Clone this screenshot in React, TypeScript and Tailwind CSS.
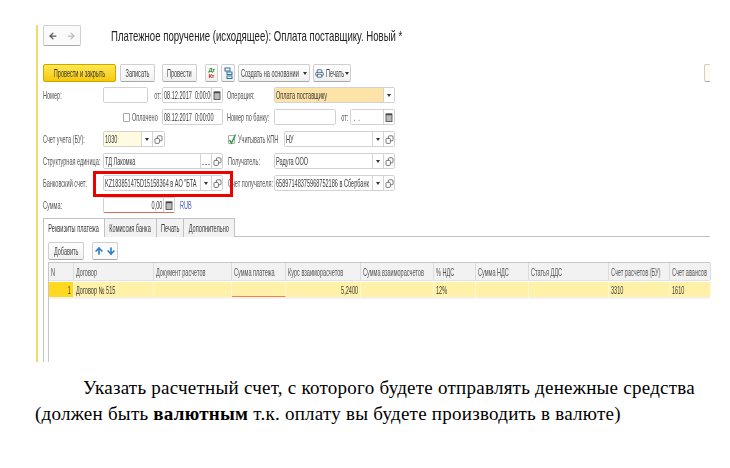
import React from "react";
import { ArrowLeft, ArrowRight, ArrowUp, ArrowDown, Printer } from "lucide-react";

// the source screenshot is squeezed horizontally, so all small text is too
const T = ({ children, o = "origin-left" }: { children: React.ReactNode; o?: string }) => (
  <span className={`inline-block shrink-0 whitespace-nowrap scale-x-[0.53] ${o}`}>{children}</span>
);

const Caret = () => <span className="w-0 h-0 shrink-0 border-x-[2px] border-x-transparent border-t-[3px] border-t-[#333]" />;

const Cal = () => (
  <svg width="8" height="9" viewBox="0 0 8 9" fill="none">
    <rect x="1" y="1" width="6" height="7.5" fill="#bbb" stroke="#555" strokeWidth="0.9" />
    <rect x="1" y="0.6" width="6" height="1.6" fill="#444" />
  </svg>
);

const LinkIcon = () => (
  <svg width="9" height="9" viewBox="0 0 9 9" fill="none" stroke="#555" strokeWidth="0.8">
    <rect x="3.4" y="0.8" width="4.6" height="5" rx="1" />
    <rect x="1" y="3.4" width="4.4" height="5" rx="1" fill="white" />
  </svg>
);

const Side = ({ children, w = "w-[11px]" }: { children: React.ReactNode; w?: string }) => (
  <span className={`${w} h-full shrink-0 border-l border-[#d4d4d4] flex items-center justify-center bg-white`}>{children}</span>
);

function Field({
  w,
  text,
  bg = "bg-white",
  end,
  extra = "",
  children,
}: {
  w: string;
  text?: string;
  bg?: string;
  end?: boolean;
  extra?: string;
  children?: React.ReactNode;
}) {
  return (
    <div className={`${w} h-[16px] shrink-0 flex items-stretch border border-[#d2d2d2] rounded-[2px] overflow-hidden ${extra}`}>
      <span className={`flex-1 min-w-0 ${bg} px-[1px] flex items-center overflow-hidden ${end ? "justify-end" : ""}`}>
        {text && <T o={end ? "origin-right" : "origin-left"}>{text}</T>}
      </span>
      {children}
    </div>
  );
}

const Label = ({ w, children, cn = "", o }: { w: string; children: React.ReactNode; cn?: string; o?: string }) => (
  <span className={`${w} shrink-0 flex text-[#555] ${cn}`}>
    <T o={o}>{children}</T>
  </span>
);

const Check = ({ on }: { on?: boolean }) => (
  <span className="relative w-[7px] h-[9px] shrink-0 border border-[#a8a8a8] bg-white rounded-[1px]">
    {on && (
      <svg className="absolute -top-[3px] -left-[1px]" width="9" height="12" viewBox="0 0 9 12" fill="none" stroke="#2f9e44" strokeWidth="1.4">
        <path d="M1.5 7 L3.5 10 L7.5 1.5" />
      </svg>
    )}
  </span>
);

const Btn = ({ w, children }: { w: string; children: React.ReactNode }) => (
  <div className={`${w} h-[18px] shrink-0 flex items-center justify-center gap-[2px] border border-[#cfcfcf] border-b-[#a9a9a9] rounded-[2px] bg-gradient-to-b from-white to-[#f0f0f0] text-[#444]`}>
    {children}
  </div>
);

const Tab = ({ w, children, active }: { w: string; children: React.ReactNode; active?: boolean }) => (
  <div className={`${w} h-[19px] flex items-center justify-center border-t border-r border-[#c4c4c4] ${active ? "border-l bg-white" : "bg-[#f2f2f2]"}`}>
    <T o="origin-center">{children}</T>
  </div>
);

const columns = [
  { w: "w-[25px]", title: "N", value: "1", cell: "bg-[#ffd91f] justify-end", end: true },
  { w: "w-[80px]", title: "Договор", value: "Договор № 515", cell: "bg-[#fff1a8]" },
  { w: "w-[78px]", title: "Документ расчетов", value: "", cell: "bg-[#fff1a8]" },
  { w: "w-[54px]", title: "Сумма платежа", value: "", cell: "bg-[#fff1a8] border-b border-b-[#f0834a]" },
  { w: "w-[75px]", title: "Курс взаиморасчетов", value: "5,2400", cell: "bg-[#fff1a8] justify-end", end: true },
  { w: "w-[73px]", title: "Сумма взаиморасчетов", value: "", cell: "bg-[#fff1a8]" },
  { w: "w-[42px]", title: "% НДС", value: "12%", cell: "bg-[#fff1a8]" },
  { w: "w-[53px]", title: "Сумма НДС", value: "", cell: "bg-[#fff1a8]" },
  { w: "w-[80px]", title: "Статья ДДС", value: "", cell: "bg-[#fff1a8]" },
  { w: "w-[61px]", title: "Счет расчетов (БУ)", value: "3310", cell: "bg-[#fff1a8]" },
  { w: "w-[41px]", title: "Счет авансов", value: "1610", cell: "bg-[#fff1a8]" },
];

export default function App() {
  return (
    <div className="relative w-[730px] h-[468px] bg-white overflow-hidden pt-[25px] pl-[36px] font-['Liberation_Sans',sans-serif]">
      <div className="relative w-[674px] h-[337px] border-l-2 border-[#f1dc6b] pl-[5px] flex flex-col text-[10.5px] leading-[12px] text-[#3a3a3a] blur-[0.3px]">
        {/* header */}
        <div className="flex items-center h-[21px]">
          <div className="w-[38px] h-[21px] flex border border-[#d0d0d0] border-b-[#aaa] rounded-[2px] bg-[#fafafa]">
            <span className="flex-1 flex items-center justify-center"><ArrowLeft size={10} strokeWidth={3} color="#555" /></span>
            <span className="flex-1 flex items-center justify-center"><ArrowRight size={10} strokeWidth={3} color="#bbb" /></span>
          </div>
          <span className="ml-[30px] text-[15px] leading-[20px] text-[#222] whitespace-nowrap origin-left scale-x-[0.64]">Платежное поручение (исходящее): Оплата поставщику. Новый *</span>
        </div>

        {/* toolbar */}
        <div className="mt-[18px] flex items-center">
          <div className="w-[73px] h-[18px] shrink-0 flex items-center justify-center border border-[#c9a800] rounded-[2px] bg-gradient-to-b from-[#ffe84a] to-[#f5c800] text-[#333]"><T o="origin-center">Провести и закрыть</T></div>
          <div className="ml-[4px]"><Btn w="w-[35px]"><T o="origin-center">Записать</T></Btn></div>
          <div className="ml-[7px]"><Btn w="w-[35px]"><T o="origin-center">Провести</T></Btn></div>
          <div className="ml-[8px]">
            <Btn w="w-[13px]">
              <span className="flex flex-col text-[6px] leading-[6px] font-bold tracking-[-0.5px]">
                <span className="text-[#2d8a2d]">Дт</span>
                <span className="text-[#d02020]">Кт</span>
              </span>
            </Btn>
          </div>
          <div className="ml-[3px]">
            <Btn w="w-[14px]">
              <svg width="9" height="12" viewBox="0 0 9 12" fill="none" stroke="#2f6f9f" strokeWidth="1">
                <rect x="1" y="1" width="5" height="3" />
                <rect x="3" y="5" width="5" height="2.5" />
                <rect x="3" y="9" width="5" height="2.5" />
              </svg>
            </Btn>
          </div>
          <div className="ml-[3px]"><Btn w="w-[72px]"><span className="w-[60px] flex"><T>Создать на основании</T></span><Caret /></Btn></div>
          <div className="ml-[3px]"><Btn w="w-[38px]"><Printer size={9} color="#3b5f85" strokeWidth={2.2} className="shrink-0" /><span className="w-[17px] flex"><T>Печать</T></span><Caret /></Btn></div>
          <div className="ml-auto w-[6px] h-[18px] border border-r-0 border-[#cfcfcf] border-b-[#aaa] rounded-l-[2px] bg-[#fffaf0]" />
        </div>

        {/* requisites */}
        <div className="mt-[5px] flex flex-col gap-[6px]">
          <div className="flex items-center">
            <Label w="w-[60px]">Номер:</Label>
            <Field w="w-[45px]" />
            <Label w="w-[14px]" cn="justify-end pr-[1px]" o="origin-right">от:</Label>
            <Field w="w-[61px]" text={"08.12.2017\u00a0\u00a00:00:00"}><Side><Cal /></Side></Field>
            <Label w="w-[47px]" cn="ml-[4px]">Операция:</Label>
            <Field w="w-[121px]" text="Оплата поставщику" bg="bg-[#fde3a7]"><Side><Caret /></Side></Field>
          </div>
          <div className="flex items-center">
            <span className="w-[80px] shrink-0" />
            <Check />
            <Label w="w-[30px]" cn="ml-[2px]">Оплачено</Label>
            <Field w="w-[61px]" text={"08.12.2017\u00a0\u00a00:00:00"} />
            <Label w="w-[47px]" cn="ml-[4px]">Номер по банку:</Label>
            <Field w="w-[62px]" />
            <Label w="w-[14px]" cn="justify-end pr-[2px]" o="origin-right">от:</Label>
            <Field w="w-[45px]" text={"\u00a0.\u00a0\u00a0."}><Side><Cal /></Side></Field>
          </div>
          <div className="flex items-center">
            <Label w="w-[60px]">Счет учета (БУ):</Label>
            <Field w="w-[62px]" text="1030" bg="bg-[#fffbe0]"><Side><Caret /></Side><Side w="w-[12px]"><LinkIcon /></Side></Field>
            <span className="w-[63px] shrink-0" />
            <Check on />
            <Label w="w-[46px]" cn="ml-[3px]">Учитывать КПН</Label>
            <Field w="w-[111px]" text="НУ"><Side><Caret /></Side><Side><LinkIcon /></Side></Field>
          </div>
          <div className="flex items-center">
            <Label w="w-[60px]">Структурная единица:</Label>
            <Field w="w-[120px]" text="ТД Лакомка"><Side><span className="leading-[10px]">...</span></Side><Side><LinkIcon /></Side></Field>
            <Label w="w-[46px]" cn="ml-[5px]">Получатель:</Label>
            <Field w="w-[121px]" text="Радуга ООО"><Side><Caret /></Side><Side><LinkIcon /></Side></Field>
          </div>
          <div className="flex items-center">
            <Label w="w-[60px]">Банковский счет:</Label>
            <Field w="w-[120px]" text='KZ183851475D15158364 в АО "БТА'><Side><Caret /></Side><Side><LinkIcon /></Side></Field>
            <Label w="w-[46px]" cn="ml-[5px]">Счет получателя:</Label>
            <Field w="w-[121px]" text="65897148375968752186 в Сбербанк"><Side><Caret /></Side><Side><LinkIcon /></Side></Field>
          </div>
          <div className="flex items-center">
            <Label w="w-[60px]">Сумма:</Label>
            <Field w="w-[72px]" text="0,00" end extra="border-b-[#e06a5a]"><Side><Cal /></Side></Field>
            <span className="ml-[5px] flex text-[#4a5bc0]"><T>RUB</T></span>
          </div>
        </div>

        {/* tabs */}
        <div className="mt-[5px] flex h-[19px] border-b border-[#c4c4c4] shrink-0">
          <Tab w="w-[62px]" active>Реквизиты платежа</Tab>
          <Tab w="w-[52px]">Комиссия банка</Tab>
          <Tab w="w-[27px]">Печать</Tab>
          <Tab w="w-[51px]">Дополнительно</Tab>
        </div>

        {/* table panel */}
        <div className="flex-1 flex flex-col border-l border-[#c4c4c4] pl-[4px]">
          <div className="mt-[5px] flex items-center">
            <Btn w="w-[36px]"><T o="origin-center">Добавить</T></Btn>
            <div className="ml-[8px] w-[26px] h-[18px] flex items-center justify-center gap-[2px] border border-[#cfcfcf] border-b-[#a9a9a9] rounded-[2px] bg-[#fafafa]">
              <ArrowUp size={10} strokeWidth={4} color="#2b82c9" />
              <ArrowDown size={10} strokeWidth={4} color="#2b82c9" />
            </div>
          </div>
          <div className="mt-[2px] flex-1 border-t border-l border-[#c8c8c8]">
            <div className="flex h-[18px] bg-[#f2f2f2] border-b border-[#e2e2e2]">
              {columns.map((c) => (
                <div key={c.title} className={`${c.w} shrink-0 border-r border-[#dcdcdc] px-[2px] flex items-center overflow-hidden text-[#555]`}><T>{c.title}</T></div>
              ))}
            </div>
            <div className="flex h-[15px] mt-px">
              {columns.map((c) => (
                <div key={c.title} className={`${c.w} shrink-0 border-r border-[#fff8d8] px-[2px] flex items-center overflow-hidden ${c.cell}`}>
                  {c.value && <T o={c.end ? "origin-right" : "origin-left"}>{c.value}</T>}
                </div>
              ))}
            </div>
            <div className="h-[2px] bg-[#f2f2f2]" />
          </div>
        </div>
      </div>

      {/* selection frame over the bank account field */}
      <div className="absolute left-[93px] top-[171px] w-[140px] h-[26px] border-[3px] border-[#ee0000]" />

      {/* caption */}
      <div className="absolute left-[35px] top-[375px] w-[695px] text-[19px] leading-[26px] tracking-[0.25px] text-black font-['Liberation_Serif',serif]">
        <p className="pl-[48px] whitespace-nowrap">Указать расчетный счет, с которого будете отправлять денежные средства</p>
        <p className="whitespace-nowrap">(должен быть <b>валютным</b> т.к. оплату вы будете производить в валюте)</p>
      </div>
    </div>
  );
}
